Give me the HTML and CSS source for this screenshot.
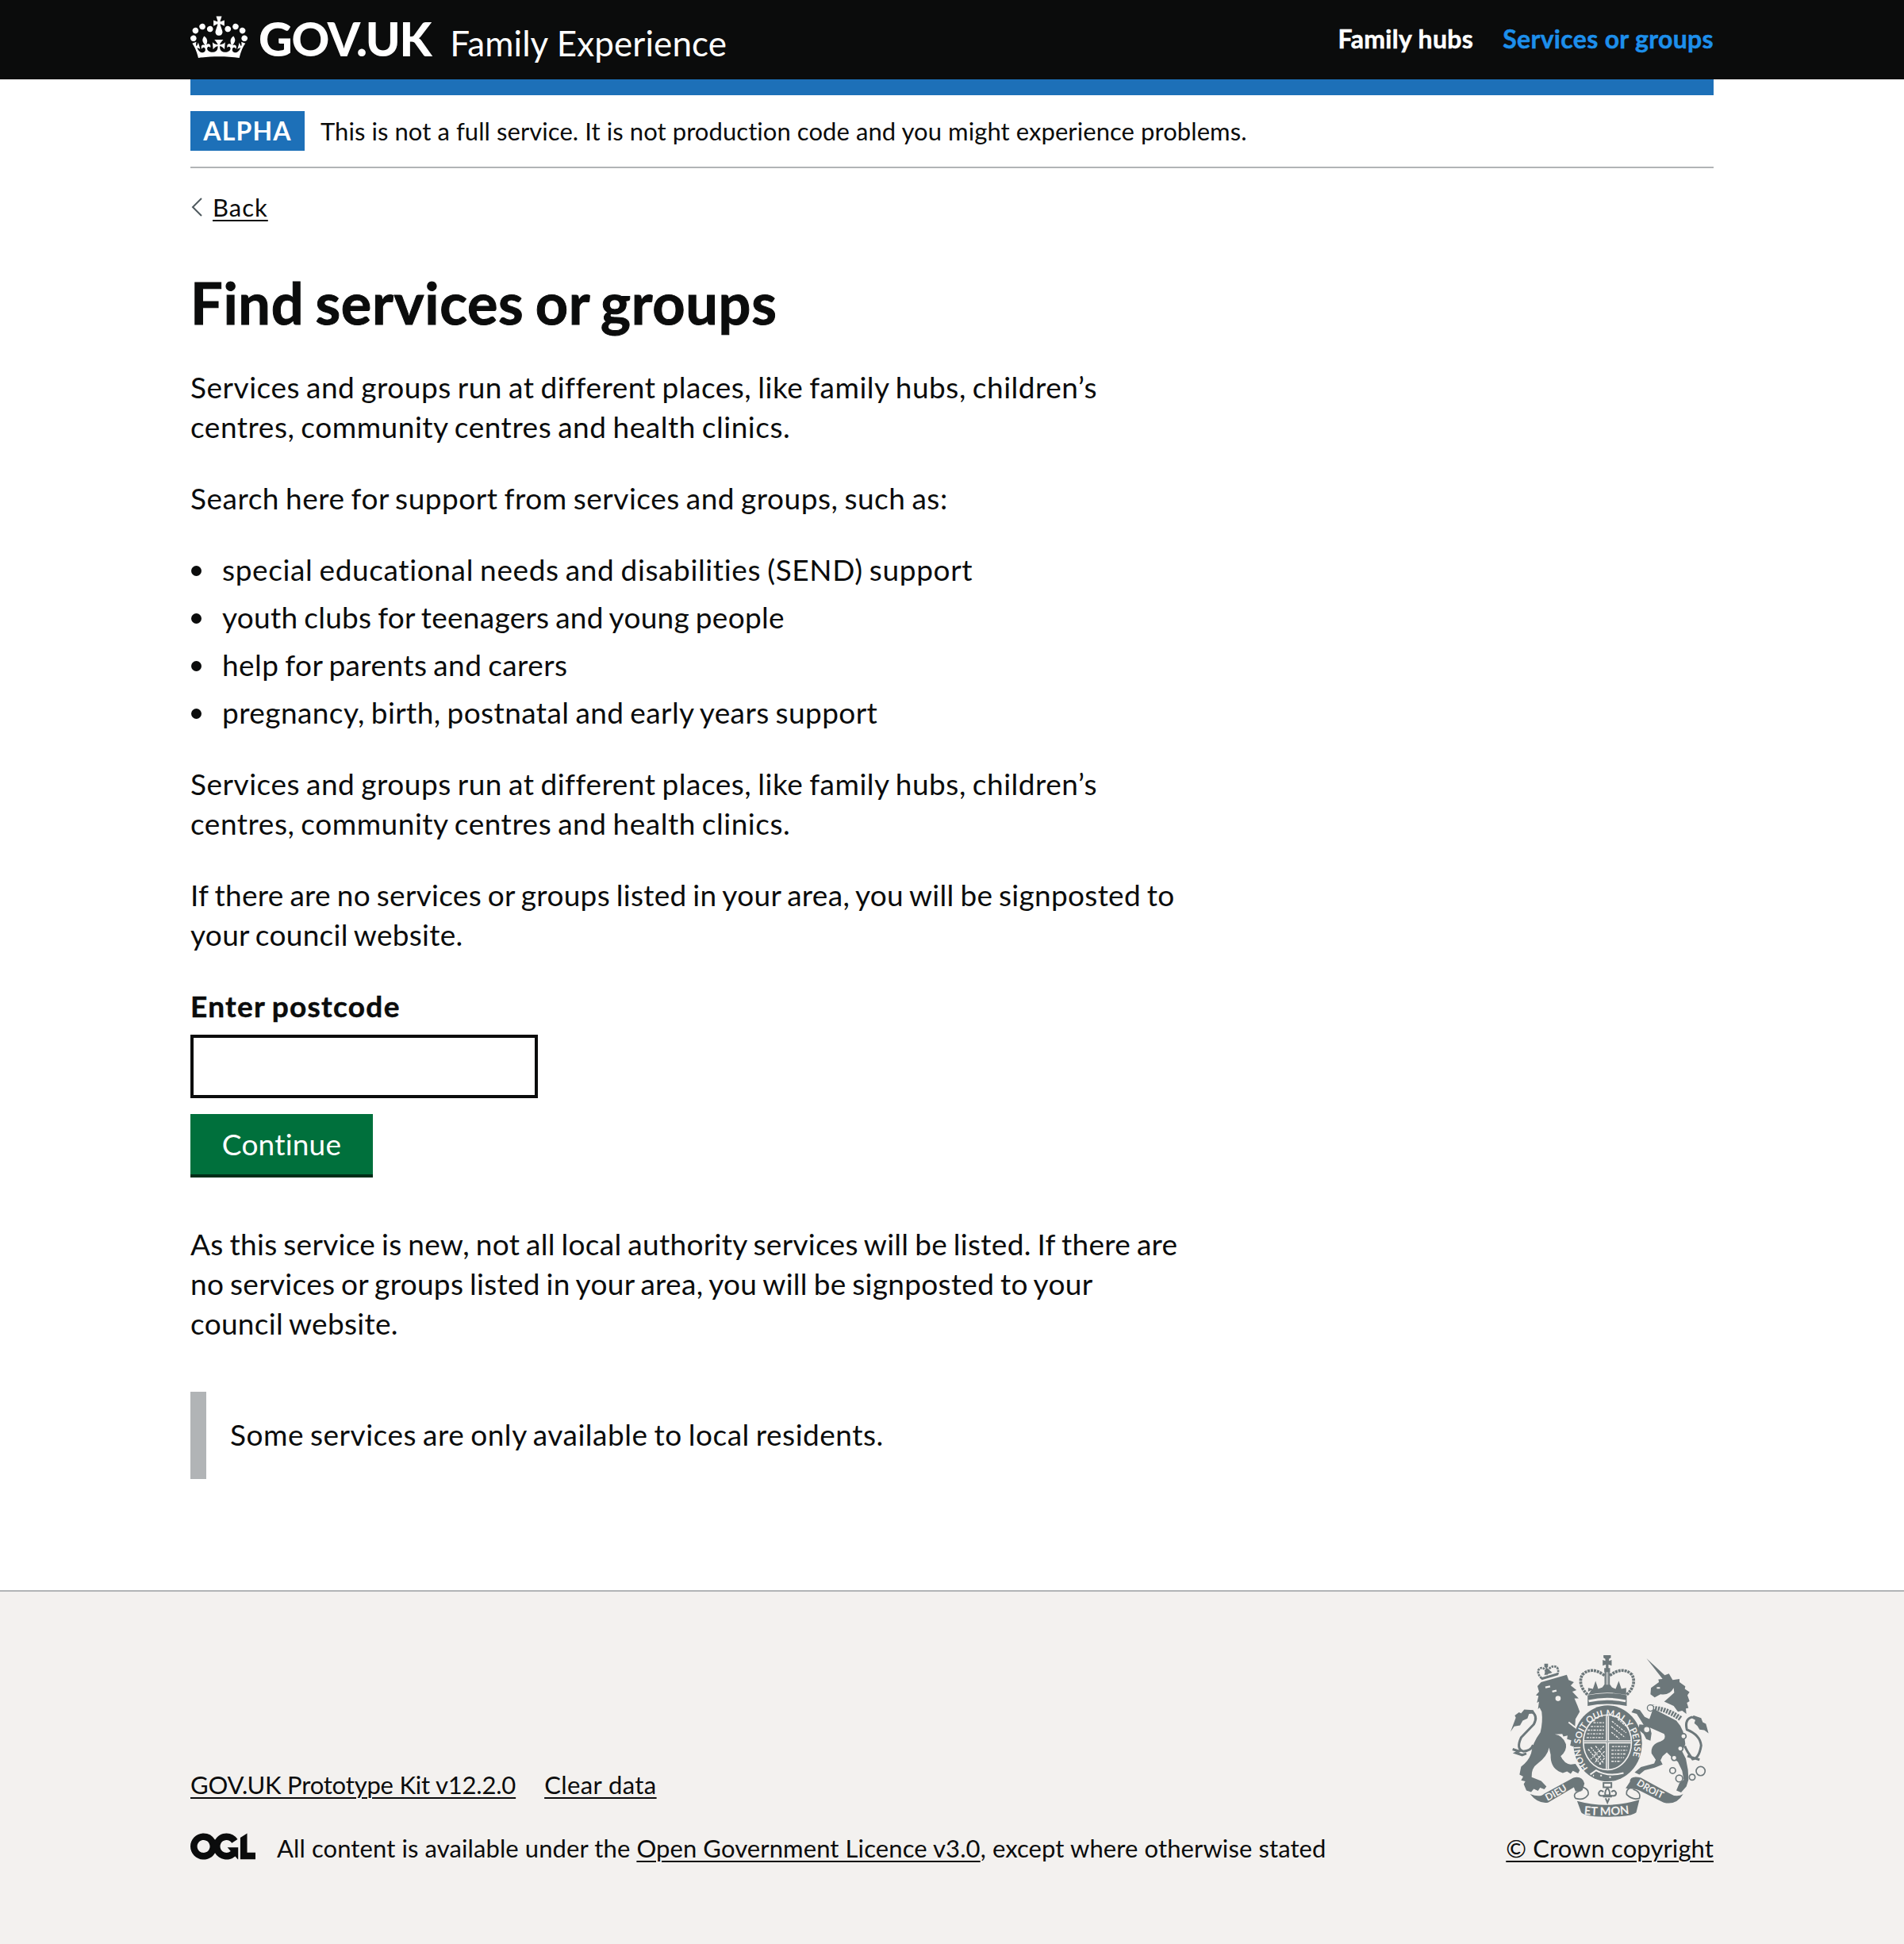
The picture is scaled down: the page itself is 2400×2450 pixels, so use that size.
FILE: index.html
```html
<!DOCTYPE html>
<html lang="en">
<head>
<meta charset="utf-8">
<title>Find services or groups</title>
<link rel="stylesheet" href="styles.css">
</head>
<body>
<header class="header">
  <div class="container header-row">
    <a class="logo" href="#">
      <svg class="logo-crown" viewBox="0 0 132 97" aria-hidden="true"><path fill="currentColor" fill-rule="evenodd" d="M25 30.2c3.5 1.5 7.7-.2 9.1-3.7 1.5-3.6-.2-7.8-3.9-9.2-3.6-1.4-7.6.3-9.1 3.9-1.4 3.5.3 7.5 3.9 9zM9 39.5c3.6 1.5 7.8-.2 9.2-3.7 1.5-3.6-.2-7.8-3.9-9.1-3.6-1.5-7.6.2-9.1 3.8-1.4 3.5.3 7.5 3.8 9zM4.4 57.2c3.5 1.5 7.7-.2 9.1-3.8 1.5-3.6-.2-7.7-3.9-9.1-3.5-1.5-7.6.3-9.1 3.8-1.4 3.5.3 7.6 3.9 9.1zm38.3-21.4c3.5 1.5 7.7-.2 9.1-3.8 1.5-3.6-.2-7.7-3.9-9.1-3.6-1.5-7.6.3-9.1 3.8-1.3 3.6.4 7.7 3.9 9.1zm64.4-5.6c-3.6 1.5-7.8-.2-9.1-3.7-1.5-3.6.2-7.8 3.8-9.2 3.6-1.4 7.7.3 9.2 3.9 1.3 3.5-.4 7.5-3.9 9zm15.9 9.3c-3.6 1.5-7.7-.2-9.1-3.7-1.5-3.6.2-7.8 3.7-9.1 3.6-1.5 7.7.2 9.2 3.8 1.5 3.5-.3 7.5-3.8 9zm4.7 17.7c-3.6 1.5-7.8-.2-9.2-3.8-1.5-3.6.2-7.7 3.9-9.1 3.6-1.5 7.7.3 9.2 3.8 1.3 3.5-.4 7.6-3.9 9.1zM89.3 35.8c-3.6 1.5-7.8-.2-9.2-3.8-1.4-3.6.2-7.7 3.9-9.1 3.6-1.5 7.7.3 9.2 3.8 1.4 3.6-.3 7.7-3.9 9.1zM69.7 17.7l8.9 4.7V9.3l-8.9 2.8c-.2-.3-.5-.6-.9-.9L72.4 0H59.6l3.5 11.2c-.3.3-.6.5-.9.9l-8.8-2.8v13.1l8.8-4.7c.3.3.6.7.9.9l-5 15.4v.1c-.2.8-.4 1.6-.4 2.4 0 4.1 3.1 7.5 7 8.1h.2c.3 0 .7.1 1 .1.4 0 .7 0 1-.1h.2c4-.6 7.1-4.1 7.1-8.1 0-.8-.1-1.7-.4-2.4V34l-5.1-15.4c.4-.2.7-.6 1-.9zM66 92.8c16.9 0 32.8 1.1 47.1 3.2 4-16.9 8.9-26.7 14-33.5l-9.6-3.4c1 4.9 1.1 7.2 0 10.2-1.5-1.4-3-4.3-4.2-8.7L108.6 76c2.8-2 5-3.2 7.5-3.3-4.4 9.4-10 11.9-13.6 11.2-4.3-.8-6.3-4.6-5.6-7.9 1-4.7 5.7-5.9 8-.5 4.3-8.7-3-11.4-7.6-8.8 7.1-7.2 7.9-13.5 2.1-21.1-8 6.1-8.1 12.3-4.5 20.8-4.7-5.4-12.1-2.5-9.5 6.2 3.4-5.2 7.9-2 7.2 3.1-.6 4.3-6.4 7.8-13.5 7.2-10.3-.9-10.9-8-11.2-13.8 2.5-.5 7.1 1.8 11 7.3L80.2 60c-4.1 4.4-8 5.3-12.3 5.4 1.4-4.4 8-11.6 8-11.6H55.5s6.4 7.2 7.9 11.6c-4.2-.1-8-1-12.3-5.4l1.4 16.4c3.9-5.5 8.5-7.7 10.9-7.3-.3 5.8-.9 12.8-11.1 13.8-7.2.6-12.9-2.9-13.5-7.2-.7-5 3.8-8.3 7.1-3.1 2.7-8.7-4.6-11.6-9.4-6.2 3.7-8.5 3.6-14.7-4.6-20.8-5.8 7.6-5 13.9 2.2 21.1-4.7-2.6-11.9.1-7.7 8.8 2.3-5.5 7.1-4.2 8.1.5.7 3.3-1.3 7.1-5.7 7.9-3.5.7-9-1.8-13.5-11.2 2.5.1 4.7 1.3 7.5 3.3l-4.7-15.4c-1.2 4.4-2.7 7.2-4.3 8.7-1.1-3-.9-5.3 0-10.2l-9.5 3.4c5 6.9 9.9 16.7 14 33.5 14.8-2.1 30.8-3.2 47.7-3.2z"/></svg>
      <span class="logo-text">GOV.UK</span>
      <span class="product-name">Family Experience</span>
    </a>
    <nav class="nav">
      <a href="#">Family hubs</a>
      <a class="active" href="#">Services or groups</a>
    </nav>
  </div>
</header>
<div class="container">
  <div class="brand-bar"></div>
  <div class="phase-banner">
    <strong class="tag">ALPHA</strong>
    <span class="phase-text">This is not a full service. It is not production code and you might experience problems.</span>
  </div>
  <a class="back" href="#">
    <svg class="back-icon" viewBox="0 0 15 24" aria-hidden="true"><path d="M14 1 3 12l11 11" fill="none" stroke="#505a5f" stroke-width="2"/></svg>
    <span class="back-label">Back</span>
  </a>
  <main class="main">
    <h1>Find services or groups</h1>
    <p>Services and groups run at different places, like family hubs, children’s<br>centres, community centres and health clinics.</p>
    <p>Search here for support from services and groups, such as:</p>
    <ul class="list">
      <li>special educational needs and disabilities (SEND) support</li>
      <li>youth clubs for teenagers and young people</li>
      <li>help for parents and carers</li>
      <li>pregnancy, birth, postnatal and early years support</li>
    </ul>
    <p>Services and groups run at different places, like family hubs, children’s<br>centres, community centres and health clinics.</p>
    <p class="tight">If there are no services or groups listed in your area, you will be signposted to<br>your council website.</p>
    <form class="form">
      <label class="label" for="postcode">Enter postcode</label>
      <input class="input" id="postcode" type="text">
      <button class="button" type="button">Continue</button>
    </form>
    <p class="tight">As this service is new, not all local authority services will be listed. If there are<br>no services or groups listed in your area, you will be signposted to your<br>council website.</p>
    <div class="inset">Some services are only available to local residents.</div>
  </main>
</div>
<footer class="footer">
  <div class="container footer-row">
    <div class="footer-meta">
      <div class="footer-links"><a class="kit" href="#">GOV.UK Prototype Kit v12.2.0</a><a class="clear" href="#">Clear data</a></div>
      <div class="licence">
        <svg class="ogl" viewBox="0 0 483.2 195.7" role="img" aria-label="OGL"><path fill="currentColor" d="M421.500 142.800V.1l-50.700 32.300v161.100h112.400v-50.700zm-122.300-9.600A47.120 47.120 0 0 1 221 97.800c0-26 21.100-47.100 47.100-47.100 16.700 0 31.400 8.700 39.700 21.800l42.700-27.200A97.630 97.630 0 0 0 268.100 0c-36.500 0-68.300 20.100-85.100 49.700A98 98 0 0 0 97.800 0C43.900 0 0 43.900 0 97.800s43.900 97.800 97.800 97.800c36.500 0 68.300-20.100 85.100-49.700a97.760 97.760 0 0 0 149.600 25.400l19.400 22.200h3v-87.800h-80l24.300 27.500zM97.800 145c-26 0-47.100-21.100-47.100-47.100s21.100-47.100 47.100-47.100 47.100 21.100 47.100 47.100S123.800 145 97.800 145"/></svg>
        <span>All content is available under the <a href="#">Open Government Licence v3.0</a>, except where otherwise stated</span>
      </div>
    </div>
    <div class="copyright">
      <svg class="arms" viewBox="70 45 752 616" aria-hidden="true">
        <defs>
          <path id="garter" d="M366 476A102 115 0 1 1 500 486L470 505"/>
          <path id="dieu" d="M212 601Q268 574 322 532"/>
          <path id="droit" d="M548 538Q600 574 674 604"/>
          <path id="mon" d="M350 651Q440 660 534 647"/>
        </defs>
        <g class="arms-fill">
          <!-- lion -->
          <path d="M188 150 285 122 292 142 312 150 300 163 322 180 306 186 330 212 314 212 326 240 334 262 318 290 316 322 332 350 342 388 326 396 318 380 310 394 298 390 302 370 286 366 288 352 272 356 268 346 240 348Q270 352 282 385 286 410 262 430 275 458 300 462L318 460 334 484 328 496 308 486 300 497 286 488 270 494 255 488Q222 470 224 425L218 398Q212 430 175 458 150 475 152 510L188 524 208 545 200 556 184 550 176 562 160 554 150 566 132 560 122 536 128 526 112 522 120 508 106 500 112 470Q140 450 150 420 155 380 185 340 195 300 190 262L182 246 176 252 180 224 172 228 178 202 168 200 180 186 174 165Z"/>
          <path d="M190 136Q172 118 178 104 190 88 204 104L210 116 216 102Q232 84 248 94 256 106 250 120" fill="none" stroke="#6c777a" stroke-width="8" stroke-dasharray="8 3"/>
          <path d="M190 142 252 124V114L186 134ZM200 124 206 96 200 92V80H214V92L210 96 230 114Z"/>
          <path d="M72 338 92 285 88 276 104 264 112 268 124 254 158 256 164 268 142 270 136 288 118 296 108 314 86 318Z"/>
          <!-- unicorn -->
          <path d="M587 60 656 124 672 118 686 142 712 138 712 150 734 166 732 176 750 188 742 200 750 222 740 228 746 248 736 250 738 270 722 258 706 262 690 240 654 224Q668 212 692 190L690 172Q674 202 640 196L618 208 602 196 604 172 634 150 632 140 648 138Z"/>
          <path d="M612 250 700 296Q732 330 734 385L722 412 736 440 744 482 746 520 738 545 718 568 700 560 712 532 728 520 722 486 706 452 680 432 664 416 648 430 640 446 648 462 618 474 580 484 560 500 542 492 566 472 616 458 622 444 606 420Q602 386 640 375 664 364 654 346L600 322 606 344 602 372 586 366 576 346 556 330 560 310 576 312 550 270 530 264 540 250 562 256 580 282 598 290Z"/>
          <path d="M766 276 794 286 800 302 812 308 822 344 806 332 788 330 780 316 768 306 772 294 754 284Z"/>
          <!-- royal crown -->
          <path d="M424 48h28v10l-7 4v8l10-4v22l-12-5v14h6v14h-22v-14h6V83l-12 5V66l10 4v-8l-7-4ZM428 108h20v60h-20ZM364 200Q438 184 512 200V240Q438 226 364 240ZM366 198 378 180 366 186 366 172 384 176 394 146 404 176 420 170 438 144 456 170 470 176 482 146 492 176 510 172V198Q438 182 366 198Z"/>
          <!-- garter -->
          <ellipse cx="440" cy="382" rx="130" ry="144"/>
          <!-- ribbons -->
          <path d="M146 574Q184 588 200 572L310 512Q344 504 352 534L344 560 318 564 312 548 214 606Q176 612 146 574Z"/>
          <path d="M726 574Q700 588 676 572L566 512Q524 502 524 528L508 552 548 556 560 560 652 606Q700 618 726 574Z"/>
          <path d="M324 600Q440 632 560 596L548 644Q530 660 440 660 352 660 340 644Z"/>
        </g>
        <g class="arms-line">
          <path d="M150 260Q178 278 160 310L112 360Q92 404 120 412 148 412 158 388M80 404 104 412 92 418 116 426 132 420" stroke-width="9"/>
          <path d="M760 282Q730 290 740 330 790 350 794 390 786 440 762 442 738 410 732 392M742 430 788 444" stroke-width="9"/>
          <circle cx="727" cy="355" r="10" fill="#f3f1ef"/><circle cx="715" cy="402" r="10" fill="#f3f1ef"/><circle cx="692" cy="437" r="10" fill="#f3f1ef"/><circle cx="686" cy="485" r="11"/><circle cx="711" cy="515" r="13"/><circle cx="760" cy="510" r="11"/><circle cx="792" cy="487" r="17"/><circle cx="736" cy="506" r="6"/>
          <path d="M428 125Q380 88 344 122 324 160 366 200M448 125Q496 88 532 122 552 160 510 200" stroke-width="11" stroke-dasharray="9 3"/>
          <path d="M340 560Q304 570 318 590 350 600 366 576 370 556 346 548M536 556Q568 566 560 590 534 598 512 576 508 556 530 548"/>
          <path d="M424 532h30v16H424ZM439 550Q426 566 432 578H446Q452 566 439 550M430 578Q406 586 406 570 412 554 424 566M448 578Q472 586 472 570 466 554 454 566M422 584h34M432 590 439 606 446 590" stroke-width="6"/>
        </g>
        <g class="arms-cut">
          <path d="M368 222Q438 206 508 222" stroke-width="9"/>
          <ellipse cx="439" cy="378" rx="91" ry="104" stroke-width="5"/>
          <path d="M439 278V480M350 376H528" stroke-width="12"/>
          <path d="M439 278V480M350 376H528" stroke="#a9afb0" stroke-width="5"/>
          <path d="M376 318h50M364 332h62M362 346h64M360 360h66M386 304h40M456 298l54 44M454 318l52 42M454 340l30 24M478 290l40 34M376 396l50 62M394 392l34 42M366 404l50 60M426 392l-50 50M428 412l-38 44M428 438l-20 24M456 394h60M454 408h60M454 422h56M454 436h48M454 450h36" stroke-width="4" stroke-dasharray="9 4 5 4"/>
          <path d="M374 500 396 484Q440 510 500 494M384 504h4M412 504h6M446 510h6" stroke-width="6"/>
          <path d="M204 170 222 166M230 186 246 182" stroke-width="7"/>
          <circle cx="252" cy="212" r="5" stroke-width="10"/>
          <path d="M626 172h12M292 302 318 322" stroke-width="6"/>
        </g>
        <path d="M598 244Q656 246 716 288" fill="none" stroke="#6c777a" stroke-width="20" stroke-dasharray="7 4"/>
        <path d="M612 238Q664 238 722 276" fill="none" stroke="#f3f1ef" stroke-width="4"/>
        <circle class="arms-ring" cx="602" cy="248" r="12"/><circle class="arms-ring" cx="588" cy="330" r="12"/>
        <path d="M438 112V160" stroke="#b3b8b9" stroke-width="9"/>
        <g class="arms-text">
          <text font-size="34"><textPath href="#garter">HONI SOIT QUI MAL Y PENSE</textPath></text>
          <text font-size="37"><textPath href="#dieu">DIEU</textPath></text>
          <text font-size="36"><textPath href="#droit">DROIT</textPath></text>
          <text font-size="44"><textPath href="#mon">ET MON</textPath></text>
        </g>
      </svg>
      <a href="#">© Crown copyright</a>
    </div>
  </div>
</footer>
</body>
</html>
```
FILE: styles.css
```css
* { box-sizing: border-box; }
body {
  margin: 0;
  min-height: 2450px;
  display: flex;
  flex-direction: column;
  background: #fff;
  color: #0b0c0c;
  font-family: Lato, "Open Sans", sans-serif;
  font-size: 37px;
  line-height: 50px;
  letter-spacing: .52px;
  font-variant-ligatures: none;
  white-space: nowrap;
}
a { color: inherit; text-decoration: none; }
.container { width: 1920px; margin: 0 auto; }

.header { height: 100px; background: #0b0c0c; color: #fff; }
.header-row { display: flex; justify-content: space-between; align-items: flex-start; }
.logo { display: flex; align-items: baseline; height: 100px; padding-top: 13px; }
.logo-crown { width: 72px; height: 54px; align-self: flex-start; margin: 7px 14px 0 0; }
.logo-text { font-size: 59px; line-height: 72px; font-weight: 900; letter-spacing: -1.200px; }
.product-name { font-size: 44px; line-height: 60px; letter-spacing: .1px; margin-left: 24px; }
.nav { display: flex; gap: 37px; padding-top: 24px; font-size: 32px; font-weight: 700; letter-spacing: .32px; -webkit-text-stroke: .5px currentColor; }
.active { color: #1d8feb; }

.brand-bar { height: 20px; background: #1d70b8; }
.phase-banner {
  display: flex;
  align-items: center;
  gap: 20px;
  height: 92px;
  border-bottom: 2px solid #b1b4b6;
  font-size: 31px;
  letter-spacing: .07px;
}
.tag {
  width: 144px;
  height: 50px;
  background: #1d70b8;
  color: #fff;
  font-size: 32px;
  line-height: 49px;
  letter-spacing: 1.200px;
  text-align: center;
}
.back { display: flex; align-items: center; height: 50px; margin-top: 24px; font-size: 31px; letter-spacing: 1px; }
.back-icon { width: 15px; height: 24px; margin-right: 13px; }
.back-label, .footer a { text-decoration: underline 2px; text-underline-offset: 4px; }

.main { padding-top: 55px; word-spacing: -2px; }
h1 { margin: 0 0 42px; font-size: 72px; line-height: 80px; font-weight: 700; letter-spacing: .7px; word-spacing: -4px; -webkit-text-stroke: 1px #0b0c0c; }
p { margin: 0 0 40px; }
.tight { letter-spacing: .3px; }
.list { margin: 0 0 40px; padding-left: 40px; list-style: none; display: flex; flex-direction: column; gap: 10px; letter-spacing: .42px; }
.list li { display: flex; align-items: center; }
.list li:nth-child(1) { letter-spacing: .63px; }
.list li:nth-child(2) { letter-spacing: .28px; }
.list li::before { content: ""; width: 13px; height: 13px; margin: 2px 26px 0 -39px; border-radius: 50%; background: #0b0c0c; }
.form { display: flex; flex-direction: column; align-items: flex-start; margin-bottom: 59px; }
.label { font-weight: 700; letter-spacing: 1.300px; margin-bottom: 11px; -webkit-text-stroke: .5px #0b0c0c; }
.input { width: 438px; height: 80px; border: 4px solid #0b0c0c; margin: 0 0 20px; padding: 10px; font: inherit; }
.button {
  width: 230px;
  height: 80px;
  border: 0;
  border-bottom: 4px solid #002d18;
  background: #00703c;
  color: #fff;
  font: inherit;
  letter-spacing: .2px;
}
.inset { height: 110px; margin-top: 61px; padding: 29px 0 0 30px; border-left: 20px solid #b1b4b6; }

.footer { flex: 1; margin-top: 140px; border-top: 2px solid #b1b4b6; background: #f3f1ef; font-size: 31px; letter-spacing: .1px; }
.footer-row { display: flex; justify-content: space-between; align-items: flex-end; height: 348px; }
.footer-meta { display: flex; flex-direction: column; gap: 30px; }
.footer-links { display: flex; gap: 36px; }
.kit { letter-spacing: -.2px; }
.clear { letter-spacing: .4px; }
.licence { display: flex; align-items: center; gap: 27px; }
.ogl { width: 82px; height: 34px; margin-top: -5px; }
.copyright { display: flex; flex-direction: column; align-items: flex-end; }
.arms { width: 251px; height: 205px; margin: 0 6px 14px 0; }
.arms-fill { fill: #6c777a; }
.arms-line { fill: none; stroke: #6c777a; stroke-width: 5; }
.arms-cut { fill: none; stroke: #f3f1ef; }
.arms-ring { fill: #f3f1ef; stroke: #6c777a; stroke-width: 4; }
.arms-text { fill: #f3f1ef; font-weight: 700; letter-spacing: 0; }
```
